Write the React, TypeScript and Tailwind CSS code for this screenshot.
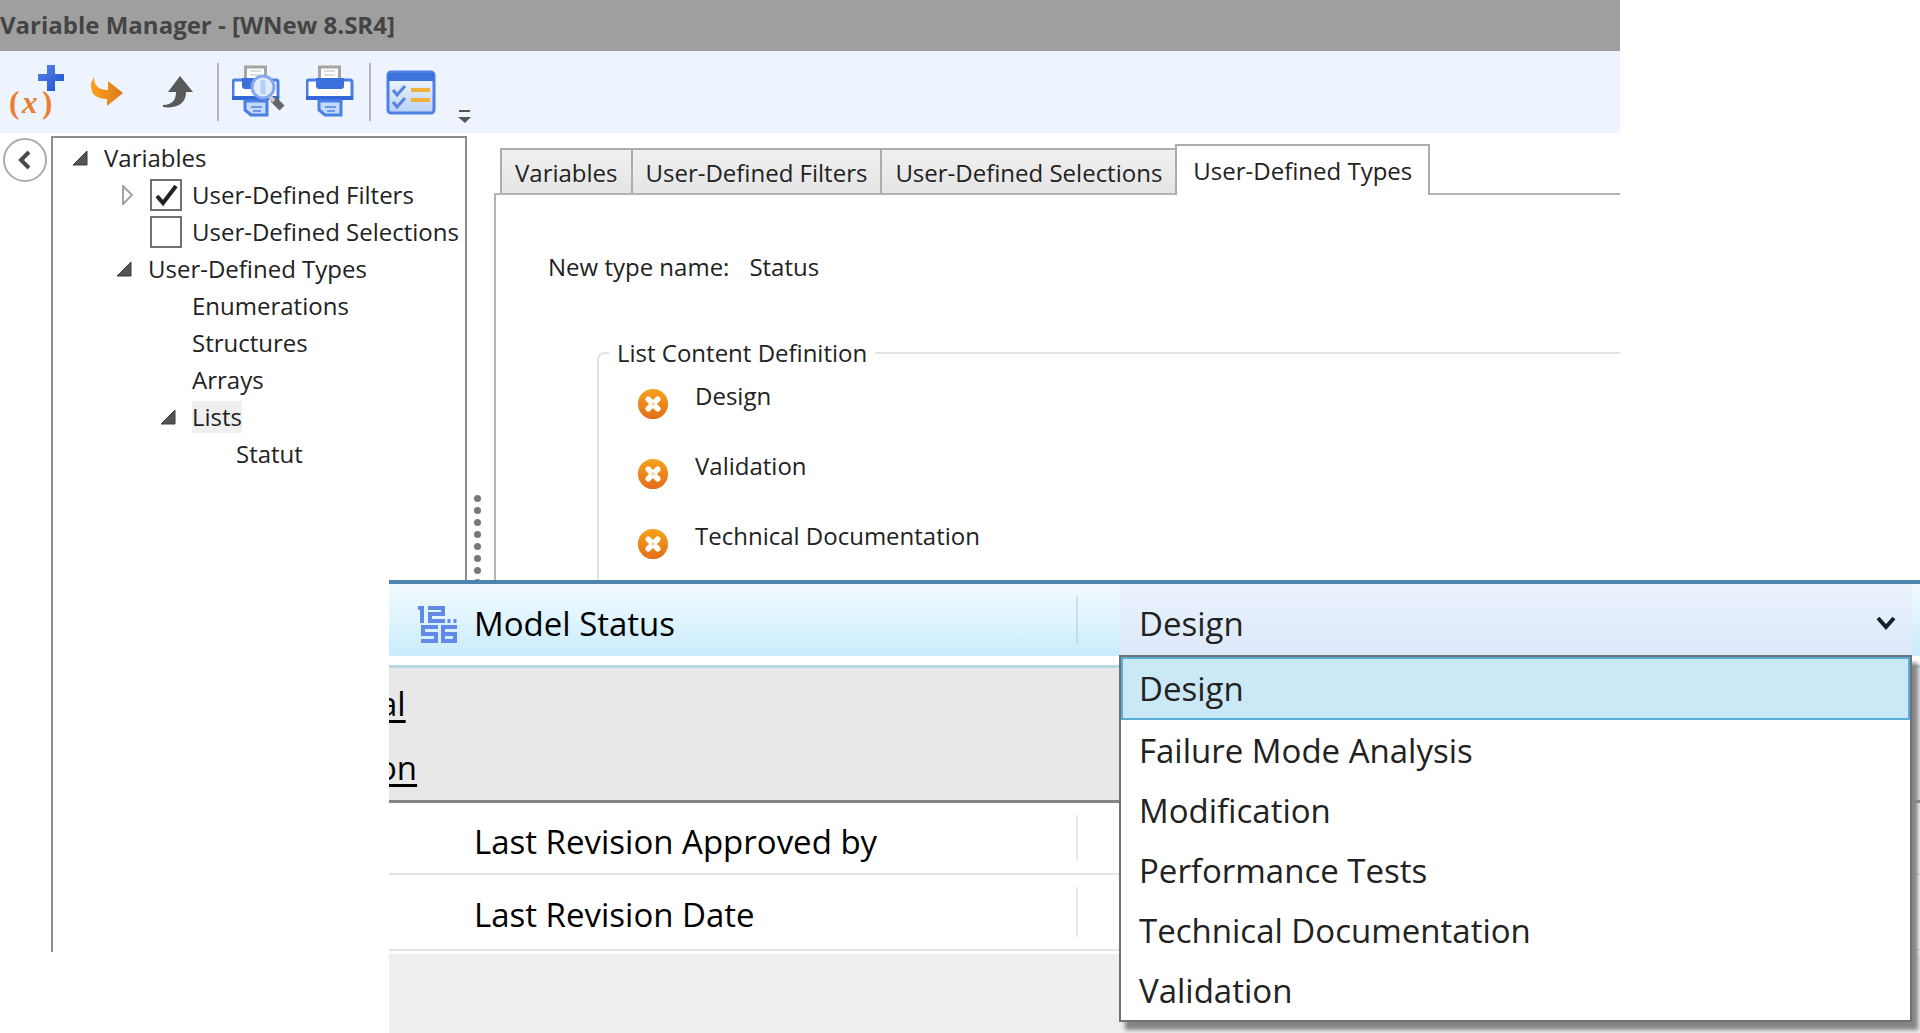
import React, { useState } from 'react';

const ToolButton = ({ label, children }: { label: string; children: React.ReactNode }) => (
  <button type="button" aria-label={label} className="flex w-[71px] items-center justify-center">
    {children}
  </button>
);

const Separator = () => (
  <div className="flex w-2.5 justify-center py-3">
    <div className="w-0.5 bg-[#b4b9c0]" />
  </div>
);

const AddVariableIcon = () => (
  <svg width="56" height="56" viewBox="0 0 56 56">
    <defs>
      <linearGradient id="plus" x1="0" y1="0" x2="1" y2="1">
        <stop offset="0" stopColor="#5b86ea" />
        <stop offset="1" stopColor="#1c4fd0" />
      </linearGradient>
    </defs>
    <path d="M39 1h8v9h9v7h-9v10h-8V17h-9v-7h9z" fill="url(#plus)" />
    <text x="1" y="49" fontFamily="Liberation Serif, serif" fontWeight="bold" fontSize="31" fill="#ea7f34">
      (
      <tspan x="14" fontStyle="italic">x</tspan>
      <tspan x="34">)</tspan>
    </text>
  </svg>
);

const OrangeArrowIcon = () => (
  <svg width="34" height="30" viewBox="0 0 34 30">
    <defs>
      <linearGradient id="orange" x1="0" y1="0" x2="1" y2="0">
        <stop offset="0" stopColor="#ffa21c" />
        <stop offset="1" stopColor="#d9781c" />
      </linearGradient>
    </defs>
    <path d="M4 0C4 8 8 13 18 13V4l15 12-16 13v-7C6 22 0 17 1 6z" fill="url(#orange)" />
  </svg>
);

const UpArrowIcon = () => (
  <svg width="32" height="34" viewBox="0 0 32 34">
    <path d="M18 1l13 16h-7c0 11-8 17-23 15v-2c9 0 13-5 13-13H6z" fill="#5a5a5a" />
  </svg>
);

const PrinterBody = () => (
  <>
    <path d="M13.500 15V2h20v13" fill="#fff" stroke="#a5a5a5" strokeWidth="3" />
    <path d="M18 6h11M18 10h11" stroke="#dcdcdc" strokeWidth="2" />
    <path d="M3 15h41a2 2 0 0 1 2 2v16H1V17a2 2 0 0 1 2-2z" fill="#fff" stroke="#4b7fe6" strokeWidth="3" />
    <path d="M10 13h28v8q0 3-3 3H13q-3 0-3-3z" fill="#3c70dc" />
    <path d="M0 31h47v4H0z" fill="#3468d8" />
    <path d="M13 36h22v14H19l-6-5z" fill="#c5d9f8" stroke="#4b7fe6" strokeWidth="3" />
    <path d="M19 42h11M21 46h8" stroke="#6c98ea" strokeWidth="2" />
  </>
);

const PrintIcon = () => (
  <svg width="48" height="54" viewBox="0 0 48 54">
    <PrinterBody />
  </svg>
);

const PreviewIcon = () => (
  <svg width="54" height="54" viewBox="0 0 54 54">
    <PrinterBody />
    <path d="M41 34l9 9" stroke="#666" strokeWidth="7" />
    <path d="M36 30l6 6" stroke="#c9c9c9" strokeWidth="4" />
    <circle cx="31" cy="22" r="11" fill="#dfecfc" stroke="#82a9ee" strokeWidth="3" />
    <path d="M31 15v14" stroke="#b4cff6" strokeWidth="5" />
  </svg>
);

const ChecklistIcon = () => (
  <svg width="50" height="46" viewBox="0 0 50 46">
    <defs>
      <linearGradient id="sheet" x1="0" y1="0" x2="0" y2="1">
        <stop offset="0" stopColor="#f8fbff" />
        <stop offset="1" stopColor="#b9d0f6" />
      </linearGradient>
    </defs>
    <rect x="2" y="3" width="46" height="41" rx="3" fill="url(#sheet)" stroke="#4f80e4" strokeWidth="3" />
    <path d="M2 4h46v8H2z" fill="#3d71dc" />
    <path d="M7 21l4 5 8-9M7 33l4 5 8-9" fill="none" stroke="#5382e0" strokeWidth="3" />
    <path d="M25 21h19M25 31h19" stroke="#f0b13c" strokeWidth="4" />
  </svg>
);

const NumbersIcon = () => (
  <svg width="40" height="40" viewBox="0 0 40 40" fill="none" stroke="#6389e6" strokeWidth="4">
    <path d="M0 4h4v15M10 4h15v6H12v7h15" />
    <path d="M31 15v4M37 15v4" strokeWidth="3" />
    <path d="M20 23H5v7h13v7H3M39 23H25v14h12v-7H25" />
  </svg>
);

const RemoveIcon = () => (
  <svg width="32" height="32" viewBox="0 0 34 34">
    <defs>
      <linearGradient id="remove" x1="0" y1="0" x2="0" y2="1">
        <stop offset="0" stopColor="#f5a21c" />
        <stop offset="1" stopColor="#e36d1a" />
      </linearGradient>
    </defs>
    <circle cx="17" cy="17" r="16" fill="url(#remove)" />
    <path d="M12 12l10 10M22 12L12 22" stroke="#fff" strokeWidth="6" strokeLinecap="round" />
    <circle cx="17" cy="17" r="2" fill="#f6d9b8" />
  </svg>
);

const Expanded = () => (
  <svg width="16" height="16" viewBox="0 0 16 16">
    <path d="M15 1v14H1z" fill="#555" stroke="#3c3c3c" />
  </svg>
);

const Collapsed = () => (
  <svg width="16" height="20" viewBox="0 0 16 20">
    <path d="M5 1l9 9-9 9z" fill="#fff" stroke="#a3a3a3" strokeWidth="2" />
  </svg>
);

const FilterCheckbox = ({ label, defaultChecked }: { label: string; defaultChecked?: boolean }) => (
  <label className="flex items-center gap-2.5">
    <span className="relative flex">
      <input
        type="checkbox"
        defaultChecked={defaultChecked}
        className="peer h-8 w-8 appearance-none border-2 border-[#707070] bg-white"
      />
      <svg viewBox="0 0 32 32" className="pointer-events-none absolute inset-0 hidden h-8 w-8 peer-checked:block">
        <path d="M7 17l6 7L26 7" fill="none" stroke="#222" strokeWidth="4" />
      </svg>
    </span>
    {label}
  </label>
);

const tabs = ['Variables', 'User-Defined Filters', 'User-Defined Selections', 'User-Defined Types'];
const entries = ['Design', 'Validation', 'Technical Documentation'];
const statuses = [
  'Design',
  'Failure Mode Analysis',
  'Modification',
  'Performance Tests',
  'Technical Documentation',
  'Validation',
];

const VariableTree = () => (
  <ul className="ml-2 w-[416px] shrink-0 border-2 border-b-0 border-[#8c8c8c] pt-px whitespace-nowrap [&_li]:flex [&_li]:h-[37px] [&_li]:items-center [&_li]:gap-4">
    <li className="pl-[19px]"><Expanded />Variables</li>
    <li className="pl-[65px]">
      <Collapsed />
      <FilterCheckbox label="User-Defined Filters" defaultChecked />
    </li>
    <li className="pl-[97px]"><FilterCheckbox label="User-Defined Selections" /></li>
    <li className="pl-[63px]"><Expanded />User-Defined Types</li>
    <li className="pl-[139px]">Enumerations</li>
    <li className="pl-[139px]">Structures</li>
    <li className="pl-[139px]">Arrays</li>
    <li className="pl-[107px]"><Expanded /><span className="bg-[#efefef]">Lists</span></li>
    <li className="pl-[183px]">Statut</li>
  </ul>
);

const TypesPanel = () => {
  const [active, setActive] = useState(3);

  return (
    <div className="flex min-w-0 flex-1 flex-col pt-2">
      <div role="tablist" className="flex items-end pl-1.5 whitespace-nowrap">
        {tabs.map((tab, index) => (
          <button
            key={tab}
            type="button"
            role="tab"
            aria-selected={index === active}
            onClick={() => setActive(index)}
            className={
              index === active
                ? 'z-10 -mb-0.5 h-[51px] border-2 border-b-0 border-[#acacac] bg-white px-4'
                : 'h-[45px] border-2 border-r-0 border-b-0 border-[#acacac] bg-linear-to-b from-[#f0f0f0] to-[#e5e5e5] px-[13px] pt-0.5'
            }
          >
            {tab}
          </button>
        ))}
      </div>
      <div className="flex-1 border-t-2 border-l-2 border-[#b4b4b4] pt-[54px] pl-[52px]">
        <div className="flex gap-5 leading-9">
          <span>New type name:</span>
          <span>Status</span>
        </div>
        <fieldset className="mt-[50px] ml-[49px] h-[600px] rounded-tl-lg border-2 border-r-0 border-b-0 border-[#e0e4e4] pl-[38px]">
          <legend className="-ml-7 px-2 leading-9">List Content Definition</legend>
          <ul>
            {entries.map((entry) => (
              <li key={entry} className="flex h-[70px] items-start gap-[26px] pt-[7px]">
                <button type="button" aria-label={`Remove ${entry}`} className="mt-2.5">
                  <RemoveIcon />
                </button>
                <span className="leading-9">{entry}</span>
              </li>
            ))}
          </ul>
        </fieldset>
      </div>
    </div>
  );
};

const VariableManager = () => (
  <div className="flex h-[952px] w-[84.4%] flex-col text-2xl text-[#222]">
    <header className="h-[51px] bg-[#9f9f9f] leading-[50px] font-bold text-[#444]">
      <h1>Variable Manager - [WNew 8.SR4]</h1>
    </header>
    <div className="flex h-[82px] bg-[#edf4fd]">
      <ToolButton label="Add variable"><AddVariableIcon /></ToolButton>
      <ToolButton label="Import"><OrangeArrowIcon /></ToolButton>
      <ToolButton label="Export"><UpArrowIcon /></ToolButton>
      <Separator />
      <ToolButton label="Print preview"><PreviewIcon /></ToolButton>
      <ToolButton label="Print"><PrintIcon /></ToolButton>
      <Separator />
      <ToolButton label="Options"><ChecklistIcon /></ToolButton>
      <button type="button" aria-label="More tools" className="ml-2.5 self-end pb-2">
        <svg width="16" height="16" viewBox="0 0 16 16">
          <path d="M3 2h11" stroke="#555" strokeWidth="2" />
          <path d="M2 8h13l-6 6z" fill="#555" />
        </svg>
      </button>
    </div>
    <main className="flex min-h-0 flex-1 pt-[3px]">
      <div className="w-[43px] shrink-0 pt-0.5 pl-[3px]">
        <button
          type="button"
          aria-label="Collapse tree"
          className="flex h-11 w-11 items-center justify-center rounded-full border-2 border-[#acacac] bg-white"
        >
          <svg width="14" height="20" viewBox="0 0 14 20">
            <path d="M11 2l-8 8 8 8" fill="none" stroke="#4a4a4a" strokeWidth="4" />
          </svg>
        </button>
      </div>
      <VariableTree />
      <div className="flex w-[27px] shrink-0 flex-col items-center gap-[5px] pt-[359px] pr-1.5">
        {Array.from({ length: 8 }, (_, index) => (
          <span key={index} className="h-[7px] w-[7px] shrink-0 rounded-full bg-[#777]" />
        ))}
      </div>
      <TypesPanel />
    </main>
  </div>
);

const CellDivider = () => <span className="absolute inset-y-3 right-[42px] w-0.5 bg-[#8ca0aa]/25" />;

const PropertyGrid = () => {
  const [status, setStatus] = useState('Design');

  return (
    <section className="absolute top-[580px] right-0 bottom-0 left-[389px] overflow-hidden border-t-4 border-[#4d83ac] bg-[#eee] text-[33px] text-black">
      <table className="w-full table-fixed border-collapse bg-white text-left">
        <colgroup>
          <col className="w-[731px]" />
          <col />
        </colgroup>
        <tbody>
          <tr className="h-[82px] align-top">
            <th className="p-0 font-normal">
              <label
                htmlFor="status"
                className="relative flex h-[72px] items-center gap-4 bg-linear-to-b from-[#f1fafe] via-[#dff4fe] to-[#c9ebfd] pt-2 pl-[29px]"
              >
                <NumbersIcon />
                <span className="font-medium">Model Status</span>
                <CellDivider />
              </label>
            </th>
            <td className="p-0">
              <div className="relative h-[72px] bg-linear-to-b from-[#f1fafe] to-[#c9ebfd] pr-2">
                <select
                  id="status"
                  value={status}
                  onChange={(e) => setStatus(e.target.value)}
                  className="h-full w-full appearance-none bg-linear-to-b from-[#ebf2fb] via-[#e3edfb] to-[#dce9fa] px-[19px] pt-2 text-[#222]"
                >
                  {statuses.map((item) => <option key={item}>{item}</option>)}
                </select>
                <svg width="20" height="16" viewBox="0 0 20 16" className="pointer-events-none absolute top-8 right-6">
                  <path d="M2 2l8 9 8-9" fill="none" stroke="#152228" strokeWidth="4" />
                </svg>
                <ul
                  role="listbox"
                  aria-label="Status values"
                  className="absolute top-[71px] right-2 -left-px border-2 border-[#707070] bg-white text-[#222] shadow-[6px_8px_4px_#858585]"
                >
                  {statuses.map((item) => (
                    <li
                      key={item}
                      role="option"
                      aria-selected={item === status}
                      onClick={() => setStatus(item)}
                      className={
                        item === status
                          ? 'h-[63px] border-2 border-[#58addb] bg-[#cbe8f6] px-4 leading-[60px]'
                          : 'h-[60px] px-[18px] leading-[62px]'
                      }
                    >
                      {item}
                    </li>
                  ))}
                </ul>
              </div>
            </td>
          </tr>
          <tr className="border-t-[3px] border-b-[3px] border-t-[#b5d8e4] border-b-[#858585] bg-[#e8e8e8]">
            <th colSpan={2} className="p-0 pt-1 leading-[64px] font-normal underline underline-offset-4">
              <div className="-ml-2.5">al</div>
              <div className="-ml-3">on</div>
            </th>
          </tr>
          <tr className="h-[73px] border-b-2 border-[#e4e4e4]">
            <th className="relative p-0 pt-2 pl-[85px] font-normal">Last Revision Approved by<CellDivider /></th>
            <td />
          </tr>
          <tr className="h-[76px] border-b-2 border-[#e4e4e4]">
            <th className="relative p-0 pt-1.5 pl-[85px] font-normal">Last Revision Date<CellDivider /></th>
            <td />
          </tr>
          <tr className="h-1"><td colSpan={2} className="p-0" /></tr>
        </tbody>
      </table>
    </section>
  );
};

export default function App() {
  return (
    <div className="relative min-h-screen overflow-hidden bg-white font-['Open_Sans','Noto_Sans',sans-serif]">
      <VariableManager />
      <PropertyGrid />
    </div>
  );
}
